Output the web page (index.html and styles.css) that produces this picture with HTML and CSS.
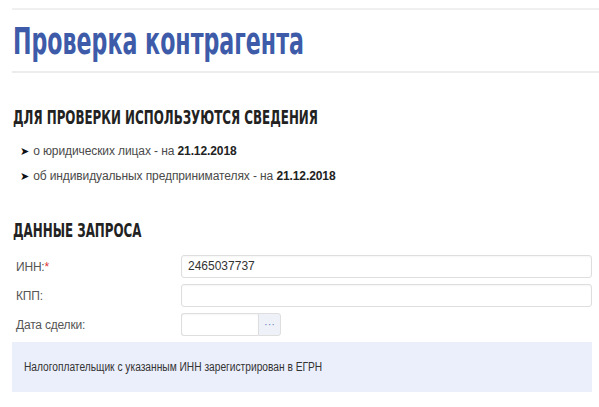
FILE: index.html
```html
<!DOCTYPE html>
<html lang="ru">
<head>
<meta charset="utf-8">
<title>Проверка контрагента</title>
<link rel="stylesheet" href="styles.css">
</head>
<body>
<div class="page">
  <header class="title-block">
    <h1 class="title"><span class="cond">Проверка контрагента</span></h1>
  </header>
  <section class="sources">
    <h2 class="section-title"><span class="cond">Для проверки используются сведения</span></h2>
    <ul class="list">
      <li><span class="arrow">➤</span>о юридических лицах - на <b>21.12.2018</b></li>
      <li><span class="arrow">➤</span>об индивидуальных предпринимателях - на <b>21.12.2018</b></li>
    </ul>
  </section>
  <section class="request">
    <h2 class="section-title"><span class="cond">Данные запроса</span></h2>
    <div class="form">
      <label class="label">ИНН:<span class="req">*</span></label>
      <div class="field"><div class="input">2465037737</div></div>
      <label class="label">КПП:</label>
      <div class="field"><div class="input"></div></div>
      <label class="label">Дата сделки:</label>
      <div class="field"><div class="date"><div class="input date-input"></div><div class="date-btn">···</div></div></div>
    </div>
    <div class="info"><span class="info-text">Налогоплательщик с указанным ИНН зарегистрирован в ЕГРН</span></div>
  </section>
</div>
</body>
</html>
```
FILE: styles.css
```css
html, body { margin: 0; padding: 0; background: #fff; }
body { font-family: "Liberation Sans", Arial, sans-serif; color: #333; }
.page { padding-top: 8px; }
.title-block {
  border-top: 2px solid #f0f0f0;
  border-bottom: 2px solid #ececec;
  margin-left: 12px;
  height: 61px;
}
.cond { display: inline-block; transform-origin: left center; white-space: nowrap; }
.title {
  margin: 0;
  padding: 12px 0 0 1px;
  font-family: "DejaVu Sans", sans-serif;
  font-stretch: condensed;
  font-weight: bold;
  font-size: 37px;
  line-height: 40px;
  color: #3d5ba8;
}
.title .cond { transform: scaleX(0.665); }
.sources { padding: 32px 12px 0 13px; }
.section-title {
  margin: 0;
  font-family: "DejaVu Sans", sans-serif;
  font-stretch: condensed;
  font-weight: bold;
  font-size: 20px;
  line-height: 24px;
  color: #222;
  text-transform: uppercase;
}
.section-title .cond { transform: scaleX(0.66); }
.list { list-style: none; margin: 10px 0 0 0; padding: 0 0 0 7px; }
.list li { font-size: 12px; line-height: 24px; color: #4a4a4a; letter-spacing: -0.1px; }
.list li b { color: #222; }
.arrow { font-family: "DejaVu Sans", sans-serif; font-size: 11px; color: #111; margin-right: 4px; }
.request { padding: 29px 7px 0 13px; }
.form {
  display: grid;
  grid-template-columns: 168px 1fr;
  row-gap: 6px;
  margin-top: 13px;
  align-items: center;
}
.label { font-size: 12px; color: #555; padding-left: 3px; letter-spacing: -0.2px; }
.req { color: #d33; }
.input {
  height: 21px;
  border: 1px solid #dedede;
  border-radius: 3px;
  font-size: 12px;
  line-height: 21px;
  padding: 0 6px;
  color: #333;
  box-shadow: inset 0 1px 2px rgba(0,0,0,0.04);
}
.date { display: flex; width: 100px; }
.date-input { flex: 1; border-radius: 3px 0 0 3px; border-right: none; }
.date-btn {
  width: 21px; height: 21px;
  border: 1px solid #dedede; border-radius: 0 3px 3px 0;
  background: #eef1f8; color: #6f86c2;
  font-size: 11px; line-height: 20px; text-align: center;
}
.info {
  margin: 6px 0 0 -1px;
  height: 50px;
  background: #ebeffb;
  font-size: 12px;
  color: #333;
  line-height: 50px;
  padding-left: 12px;
}
.info-text { display: inline-block; transform: scaleX(0.85); transform-origin: left center; white-space: nowrap; }
```
